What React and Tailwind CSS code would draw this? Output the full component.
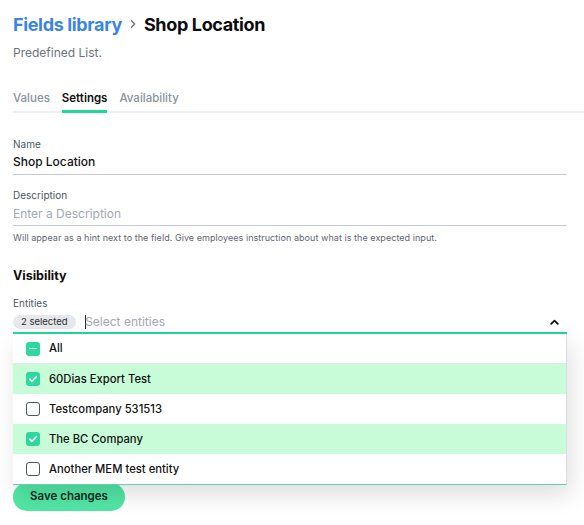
import React from "react";

const entities = [
  { name: "60Dias Export Test", checked: true },
  { name: "Testcompany 531513", checked: false },
  { name: "The BC Company", checked: true },
  { name: "Another MEM test entity", checked: false },
];

function CheckBox({ checked }) {
  if (checked) {
    return (
      <span className="w-[14px] h-[14px] rounded-[3px] bg-[#2ed89c] flex items-center justify-center shrink-0">
        <svg width="10" height="10" viewBox="0 0 10 10" fill="none">
          <path d="M1.8 5.2 L4 7.3 L8.3 2.7" stroke="white" strokeWidth="1.6" strokeLinecap="round" strokeLinejoin="round" />
        </svg>
      </span>
    );
  }
  return <span className="w-[14px] h-[14px] rounded-[3px] border border-[#4b5563] bg-white shrink-0" />;
}

export default function App() {
  return (
    <div className="w-[584px] h-[525px] bg-white overflow-hidden pl-[13px] font-['Inter',sans-serif] text-[#111827]">
      {/* breadcrumb heading */}
      <div className="mt-[10px] h-[28px] flex items-center text-[18px] font-bold tracking-[-0.35px]">
        <span className="text-[#3a85e2]">Fields library</span>
        <svg className="mx-[7px]" width="8" height="10" viewBox="0 0 8 10" fill="none">
          <path d="M2.5 1.8 L5.6 5 L2.5 8.2" stroke="#6b7280" strokeWidth="1.4" strokeLinecap="round" strokeLinejoin="round" />
        </svg>
        <span className="text-[#0b0b0b]">Shop Location</span>
      </div>
      <p className="mt-[7px] h-[16px] leading-[16px] text-[12px] text-[#6b7280]">Predefined List.</p>

      {/* tabs */}
      <div className="mt-[29px] w-[571px] flex gap-[12px] border-b-2 border-[#eff0f2] text-[11.5px] leading-[16px]">
        <div className="pb-[4px] text-[#8a919c] font-medium">Values</div>
        <div className="pb-[4px] -mb-[2px] text-[#111] font-semibold border-b-[3px] border-[#22d79b]">Settings</div>
        <div className="pb-[4px] text-[#8a919c] font-medium">Availability</div>
      </div>

      <div className="w-[554px]">
        {/* name */}
        <div className="mt-[24px] text-[10px] leading-[14px] text-[#4b5563]">Name</div>
        <div className="mt-[2px] pb-[3px] border-b border-[#c5c8ce] text-[12px] leading-[18px] text-[#111] font-medium">
          Shop Location
        </div>

        {/* description */}
        <div className="mt-[13px] text-[10px] leading-[14px] text-[#4b5563]">Description</div>
        <div className="mt-[3px] pb-[2px] border-b border-[#c5c8ce] text-[12px] leading-[18px] text-[#a3a8b1]">
          Enter a Description
        </div>
        <div className="mt-[6px] text-[9px] leading-[12px] tracking-[0.05px] text-[#5f6570]">
          Will appear as a hint next to the field. Give employees instruction about what is the expected input.
        </div>

        {/* visibility */}
        <div className="mt-[23px] text-[12.5px] leading-[18px] font-bold text-[#0b0b0b]">Visibility</div>
        <div className="mt-[11px] text-[10px] leading-[14px] text-[#4b5563]">Entities</div>

        <div className="relative">
          <div className="mt-[2px] h-[22px] pb-[1px] flex items-center border-b-2 border-[#22d79b] relative">
            <span className="h-[14px] px-[8px] rounded-full bg-[#e6e8eb] text-[9.5px] leading-[14px] text-[#2b2f36]">
              2 selected
            </span>
            <span className="ml-[9px] w-[1.5px] h-[14px] bg-[#2b2b2b]" />
            <span className="-ml-[1px] text-[12px] leading-[18px] text-[#a3a8b1]">Select entities</span>
            <svg className="absolute right-[8px] top-[7px]" width="9" height="6" viewBox="0 0 9 6" fill="none">
              <path d="M1.2 4.8 L4.5 1.6 L7.8 4.8" stroke="#111" strokeWidth="1.8" strokeLinecap="round" strokeLinejoin="round" />
            </svg>
          </div>

          {/* entity options */}
          <div className="absolute left-0 right-0 top-full bg-white border-r border-[#dcdde0] border-b border-b-[#63cfae] shadow-[4px_10px_22px_rgba(0,0,0,0.13)] z-10 text-[11.25px] text-[#111]">
            <div className="h-[30px] flex items-center gap-[9px] pl-[13px] border-b border-[#e4e6e9]">
              <span className="w-[14px] h-[14px] rounded-[3px] bg-[#2ed89c] flex items-center justify-center">
                <span className="w-[8px] h-[1.6px] bg-white rounded" />
              </span>
              <span className="font-medium">All</span>
            </div>
            {entities.map((e) => (
              <div
                key={e.name}
                className={`h-[30px] flex items-center gap-[9px] pl-[13px] ${e.checked ? "bg-[#c8fcd8]" : "bg-white"}`}
              >
                <CheckBox checked={e.checked} />
                <span className="font-medium">{e.name}</span>
              </div>
            ))}
          </div>
        </div>

        <button className="mt-[149px] h-[28px] w-[112px] rounded-full bg-[#52e6a5] text-[11.5px] font-semibold text-[#0f2b22]">
          Save changes
        </button>
      </div>
    </div>
  );
}
